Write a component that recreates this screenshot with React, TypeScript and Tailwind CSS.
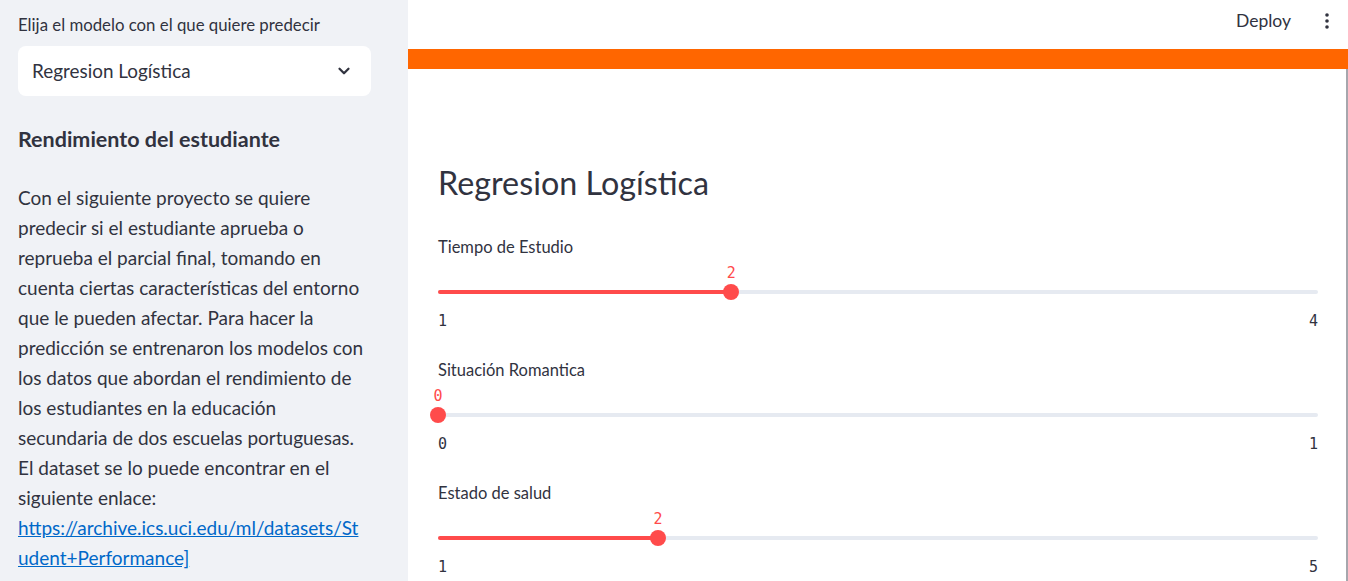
import { ChevronDown } from 'lucide-react';

const sans = "font-['Lato','Noto_Sans',sans-serif]";
const mono = "font-['DejaVu_Sans_Mono','Liberation_Mono',monospace]";

const sliders = [
  { label: 'Tiempo de Estudio', min: 1, max: 4, value: 2 },
  { label: 'Situación Romantica', min: 0, max: 1, value: 0 },
  { label: 'Estado de salud', min: 1, max: 5, value: 2 },
];

function Slider({ label, min, max, value }: { label: string; min: number; max: number; value: number }) {
  const pct = ((value - min) / (max - min)) * 100;
  return (
    <div className="mb-[25px]">
      <div className="h-[20px] text-[16.5px] leading-[20px]">{label}</div>
      <div className="relative h-[50px]">
        <div className="absolute left-0 right-0 top-[33px] h-[4px] rounded-full bg-[#e6eaf1]" />
        <div className="absolute left-0 top-[33px] h-[4px] rounded-full bg-[#ff4b4b]" style={{ width: `${pct}%` }} />
        <div
          className="absolute top-[27px] h-[16px] w-[16px] -translate-x-1/2 rounded-full bg-[#ff4b4b]"
          style={{ left: `${pct}%` }}
        />
        <div
          className={`absolute top-[6px] -translate-x-1/2 text-[15px] leading-[20px] text-[#ff4b4b] ${mono}`}
          style={{ left: `${pct}%` }}
        >
          {value}
        </div>
      </div>
      <div className={`flex h-[28px] items-center justify-between text-[15px] ${mono}`}>
        <span>{min}</span>
        <span>{max}</span>
      </div>
    </div>
  );
}

export default function App() {
  return (
    <div className={`flex h-[581px] w-[1348px] overflow-hidden bg-white text-[#31333f] ${sans}`}>
      {/* Sidebar */}
      <aside className="w-[408px] shrink-0 bg-[#f0f2f6] px-[18px] pt-[15px]">
        <div className="h-[20px] text-[16.8px] leading-[20px]">Elija el modelo con el que quiere predecir</div>
        <div className="mt-[11px] flex h-[50px] w-[353px] items-center justify-between rounded-lg bg-white pl-[14px] pr-[18px] text-[18.9px]">
          <span>Regresion Logística</span>
          <ChevronDown size={18} strokeWidth={3} />
        </div>
        <h3 className="mt-[28px] text-[21.5px] font-bold leading-[30px]">Rendimiento del estudiante</h3>
        <p className="mt-[29px] text-[19px] leading-[30px]">
          Con el siguiente proyecto se quiere
          <br />
          predecir si el estudiante aprueba o
          <br />
          reprueba el parcial final, tomando en
          <br />
          cuenta ciertas características del entorno
          <br />
          que le pueden afectar. Para hacer la
          <br />
          predicción se entrenaron los modelos con
          <br />
          los datos que abordan el rendimiento de
          <br />
          los estudiantes en la educación
          <br />
          secundaria de dos escuelas portuguesas.
          <br />
          El dataset se lo puede encontrar en el
          <br />
          siguiente enlace:
          <br />
          <a className="text-[#0068c9] underline" href="#">
            https://archive.ics.uci.edu/ml/datasets/St
            <br />
            udent+Performance]
          </a>
        </p>
      </aside>

      {/* Main */}
      <main className="flex flex-1 flex-col">
        <header className="flex h-[49px] shrink-0 items-center justify-end gap-[34px] pb-[7px] pr-[19px]">
          <span className="text-[17.5px]">Deploy</span>
          <svg width="4" height="18" viewBox="0 0 4 18" className="fill-[#31333f]">
            <circle cx="2" cy="3" r="1.8" />
            <circle cx="2" cy="9" r="1.8" />
            <circle cx="2" cy="15" r="1.8" />
          </svg>
        </header>
        <div className="h-[20px] shrink-0 bg-[#ff6600]" />
        <div className="flex flex-1">
          <div className="flex-1 pl-[30px] pr-[28px] pt-[95px]">
            <h1 className="h-[38px] text-[32.3px] leading-[38px]">Regresion Logística</h1>
            <div className="mt-[35px]">
              {sliders.map((s) => (
                <Slider key={s.label} {...s} />
              ))}
            </div>
          </div>
          <div className="w-[2px] bg-[#a6a6ad]" />
        </div>
      </main>
    </div>
  );
}
